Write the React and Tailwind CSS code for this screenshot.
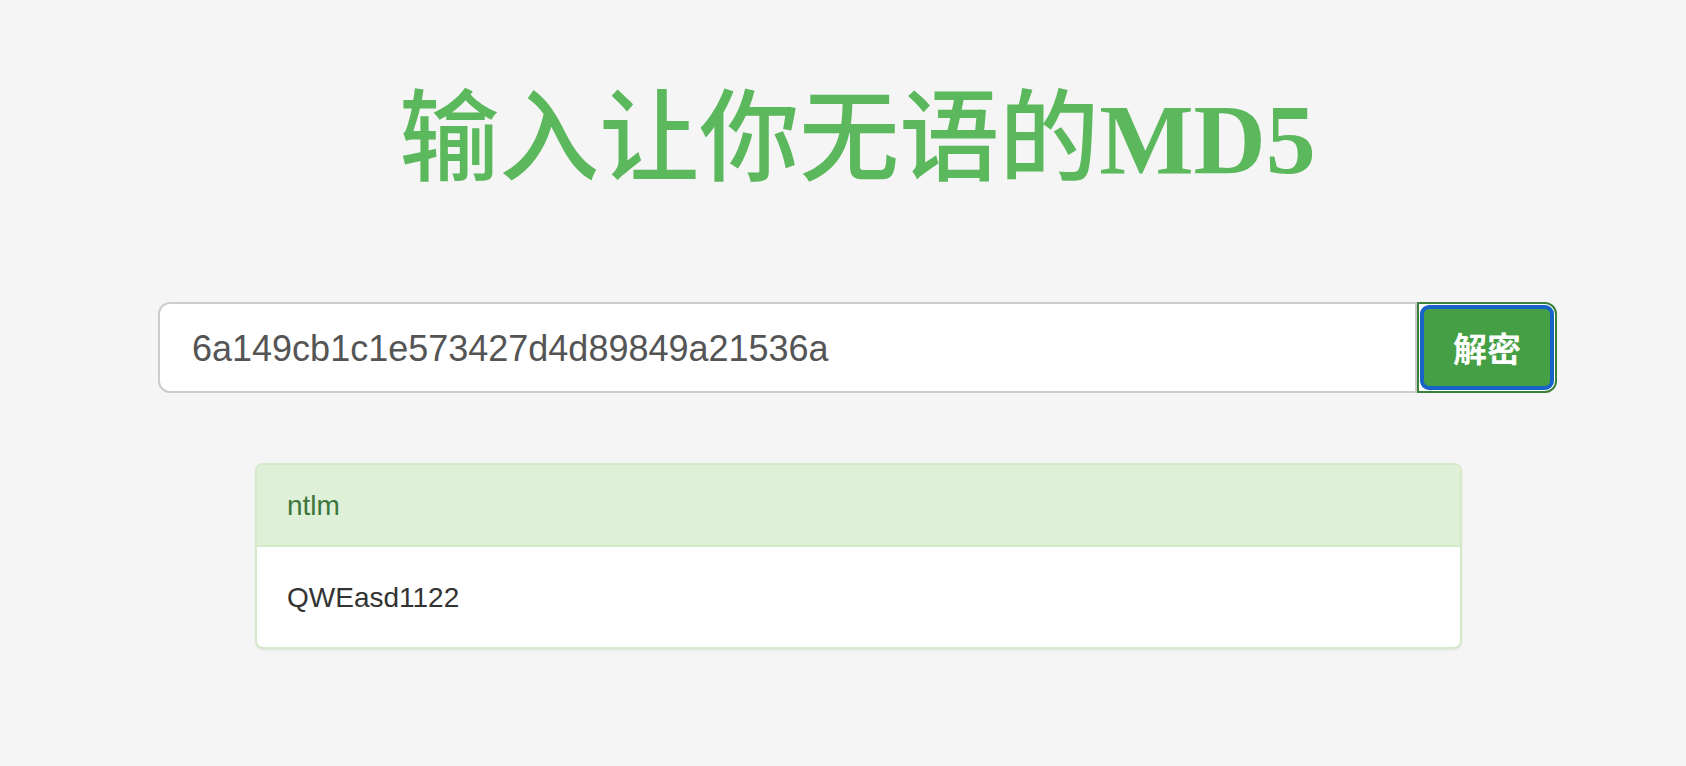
import React from "react";

const App = () => {
  return (
    <div className="min-h-[766px] w-full bg-[#f5f5f5] font-['Liberation_Sans','Noto_Sans_CJK_SC',sans-serif]">
      <div className="ml-[158px] w-[1399px] pt-[86px] flex flex-col">
        <h1 className="text-center text-[100px] leading-[108px] text-[#5cb85c] font-medium font-['Liberation_Serif','Noto_Sans_CJK_SC',serif]">
          输入让你无语的<span className="font-bold">MD5</span>
        </h1>

        <div className="mt-[108px] flex h-[91px]">
          <div className="flex-1 flex items-center bg-white border-2 border-[#cccccc] rounded-l-[12px] px-[32px] pt-[2px] text-[36px] text-[#555555]">
            6a149cb1c1e573427d4d89849a21536a
          </div>
          <button className="w-[140px] h-full border-2 border-[#3b7f3b] rounded-r-[12px] bg-white p-[1px]">
            <span className="flex items-center justify-center w-full h-full rounded-[9px] border-[4px] border-[#1763c8] bg-[#45a045] text-white text-[34px] font-bold font-['Noto_Sans_CJK_SC',sans-serif]">
              解密
            </span>
          </button>
        </div>

        <div className="ml-[97px] mt-[70px] w-[1207px] border-2 border-[#d6e9c6] rounded-[8px] bg-white shadow-[0_2px_2px_rgba(0,0,0,0.05)] overflow-hidden">
          <div className="bg-[#dff0d8] border-b-2 border-[#d6e9c6] px-[30px] pt-[21px] pb-[19px] text-[28px] leading-[40px] text-[#3c763d]">
            ntlm
          </div>
          <div className="px-[30px] pt-[31px] pb-[29px] text-[28px] leading-[40px] text-[#333333]">
            QWEasd1122
          </div>
        </div>
      </div>
    </div>
  );
};

export default App;
